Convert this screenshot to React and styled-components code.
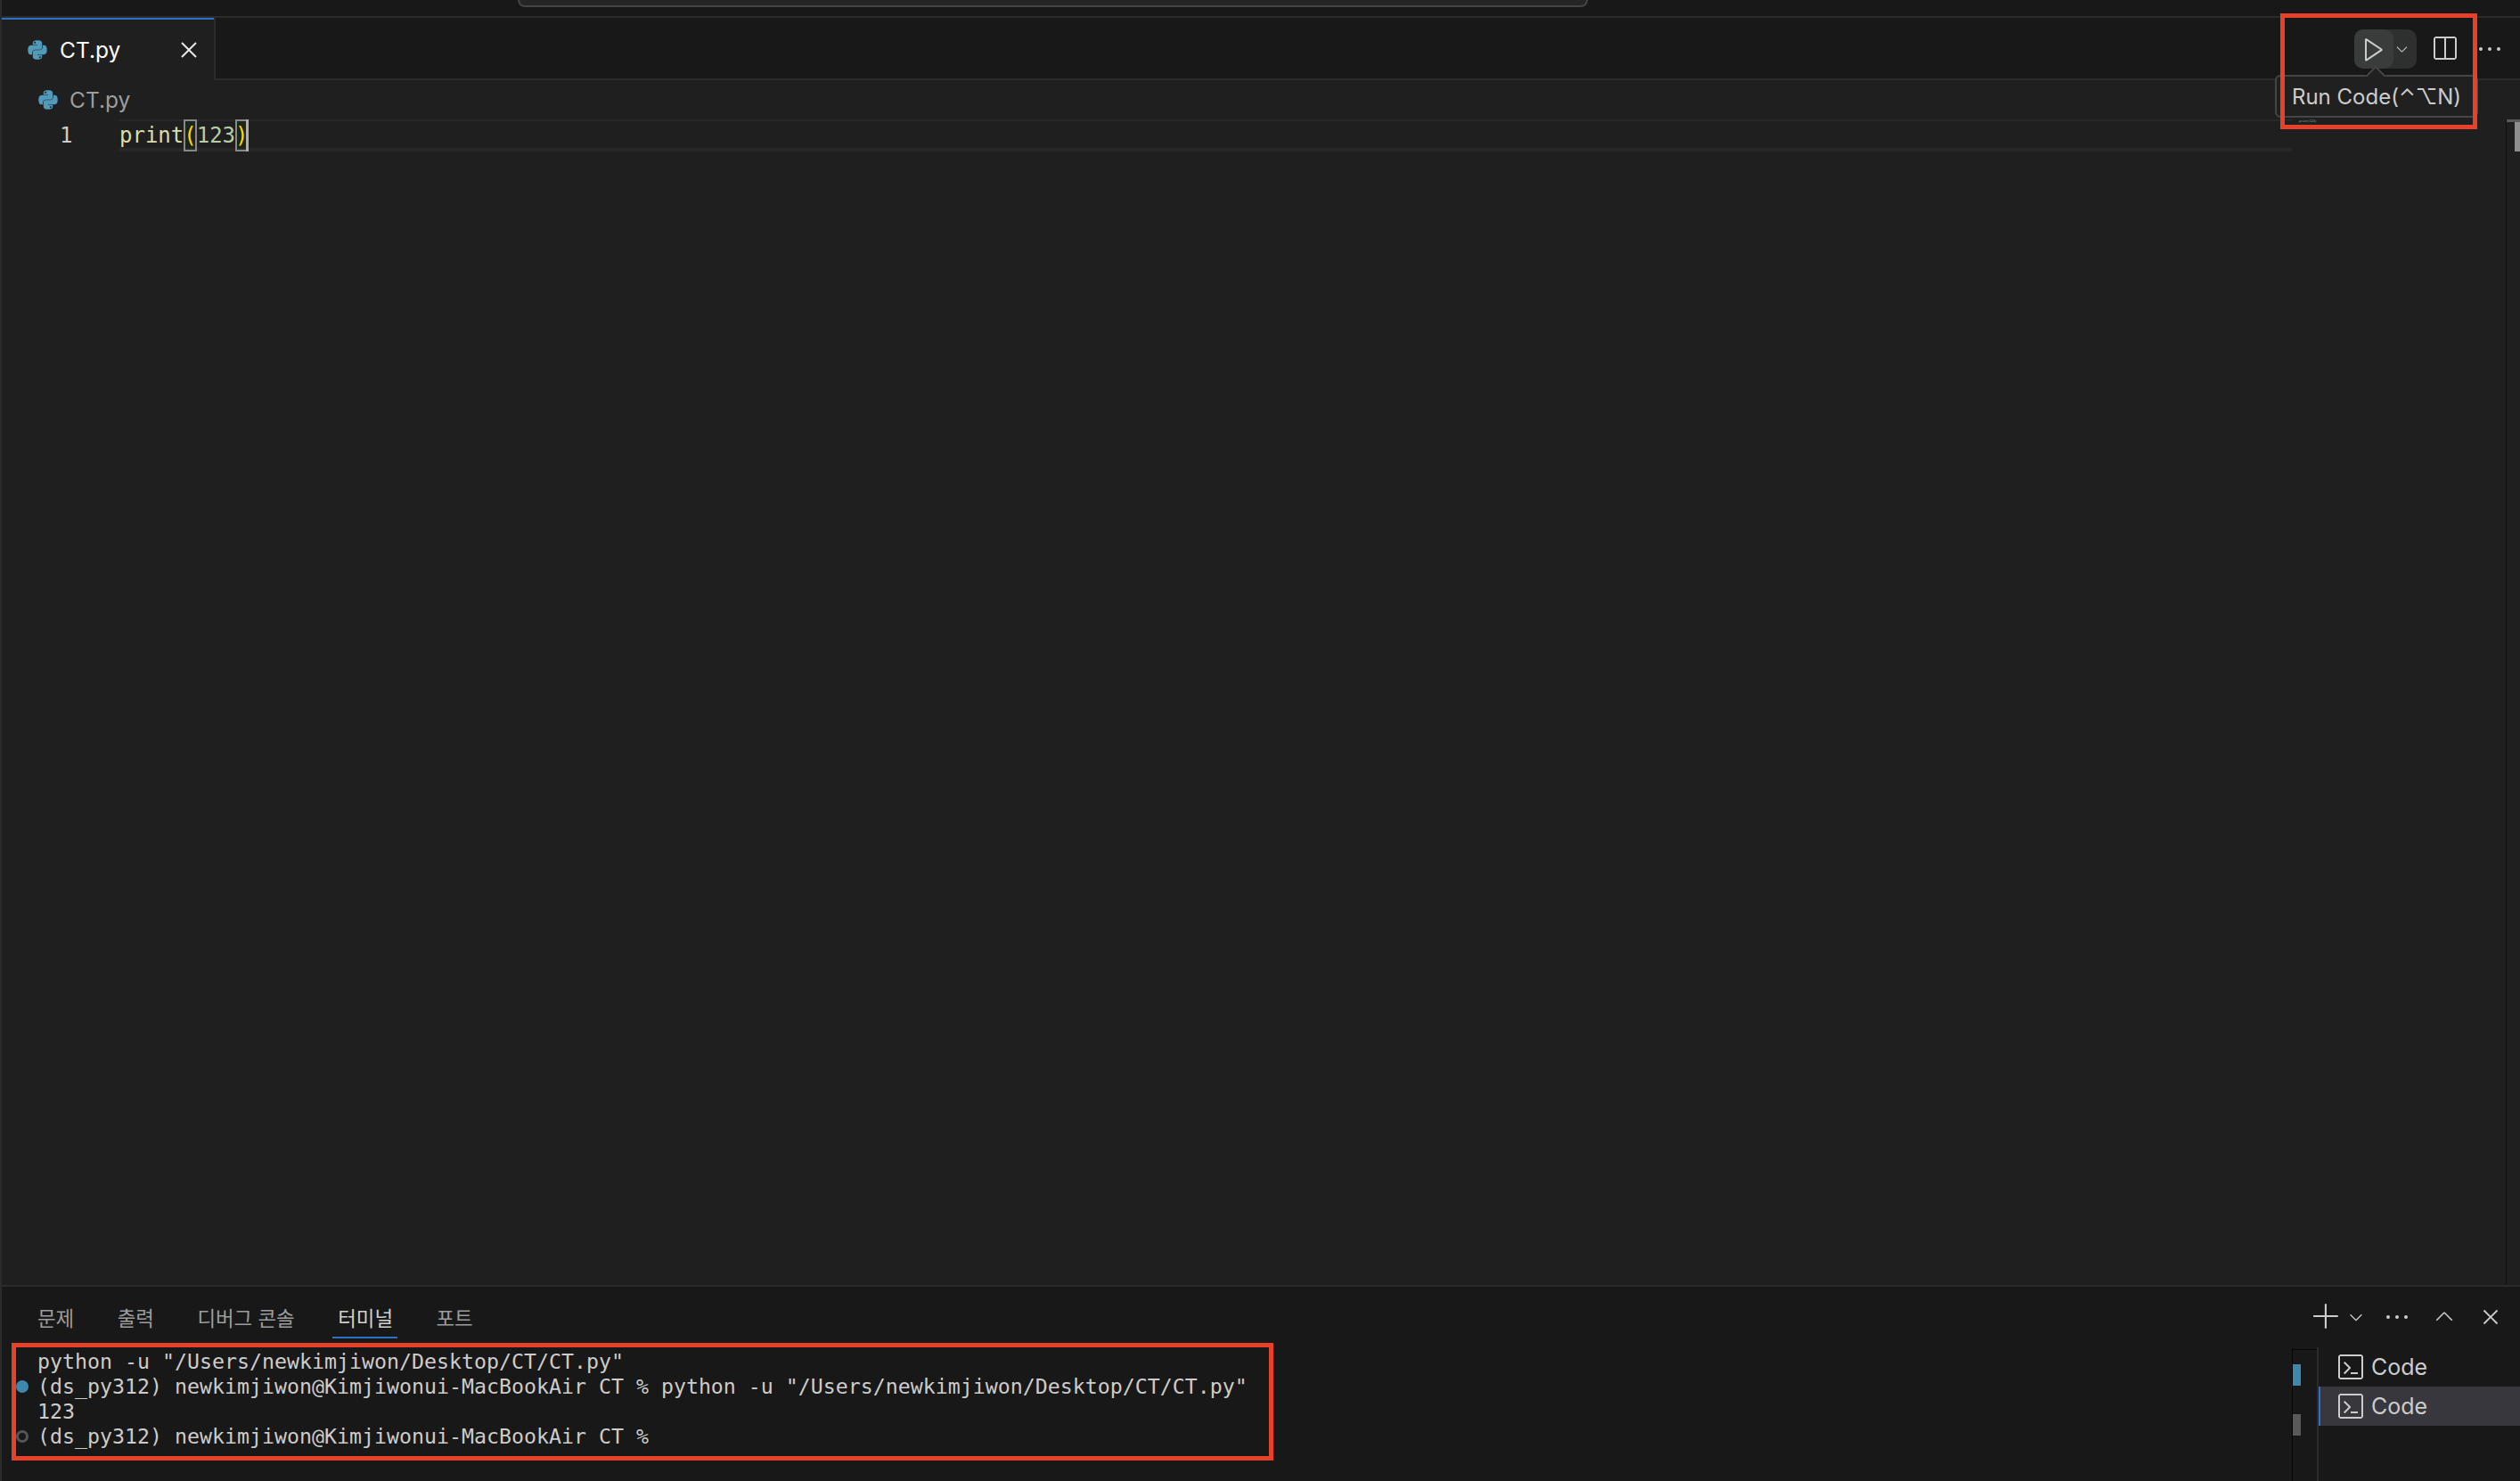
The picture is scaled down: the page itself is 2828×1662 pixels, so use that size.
import React from 'react';
import styled, { createGlobalStyle } from 'styled-components';
import {
  VscAdd,
  VscChevronDown,
  VscChevronUp,
  VscClose,
  VscEllipsis,
  VscPlay,
  VscSplitHorizontal,
  VscTerminal,
} from 'react-icons/vsc';

const GlobalStyle = createGlobalStyle`
  html, body {
    margin: 0;
    padding: 0;
    background: #1f1f1f;
  }
  * {
    box-sizing: border-box;
  }
`;

const uiFont = `Inter, "Noto Sans CJK KR", sans-serif`;
const monoFont = `"DejaVu Sans Mono", "Noto Sans CJK KR", monospace`;

const Window = styled.div`
  position: relative;
  width: 2828px;
  height: 1662px;
  overflow: hidden;
  display: flex;
  flex-direction: column;
  background: #1f1f1f;
  border-left: 2px solid #2b2b2b;
  font-family: ${uiFont};
`;

const TitleBar = styled.div`
  flex: none;
  height: 20px;
  margin-left: -2px;
  padding-left: 581px;
  background: #181818;
  border-bottom: 2px solid #2b2b2b;
`;

const SearchBox = styled.div`
  width: 1201px;
  height: 8px;
  background: #252526;
  border: 2px solid #454545;
  border-top: none;
  border-radius: 0 0 10px 10px;
`;

const TabBar = styled.div`
  flex: none;
  height: 70px;
  display: flex;
  background: #181818;
`;

const Tab = styled.div`
  width: 238px;
  height: 70px;
  display: flex;
  align-items: center;
  padding-left: 29px;
  background: #1f1f1f;
  border-top: 2px solid #2f6fc4;
  color: #ffffff;
  font-size: 24.5px;
`;

const TabName = styled.span`
  margin-left: 14px;
  flex: 1;
`;

const TabClose = styled.span`
  display: flex;
  margin-right: 12px;
  color: #e8e8e8;
`;

const TabRest = styled.div`
  flex: 1;
  display: flex;
  justify-content: flex-end;
  align-items: center;
  padding-top: 2px;
  border-left: 2px solid #2b2b2b;
  border-bottom: 2px solid #2b2b2b;
`;

const RunGroup = styled.div`
  display: flex;
  height: 44px;
  margin-right: 15px;
  border-radius: 10px;
  background: #2e2f2f;
  color: #cccccc;
`;

const RunButton = styled.span`
  width: 44px;
  display: flex;
  align-items: center;
  justify-content: center;
  background: #3a3b3b;
  border-radius: 10px;
`;

const RunCaret = styled.span`
  width: 26px;
  padding-right: 7px;
  display: flex;
  align-items: center;
  justify-content: center;
`;

const ActionIcon = styled.span`
  display: flex;
  margin-right: ${(p) => p.$gap}px;
  color: #cccccc;
`;

const Breadcrumb = styled.div`
  flex: none;
  height: 44px;
  display: flex;
  align-items: center;
  padding-left: 41px;
  color: #9d9d9d;
  font-size: 24.5px;
`;

const CrumbName = styled.span`
  margin-left: 13px;
`;

const EditorBody = styled.div`
  flex: 1;
  min-height: 0;
  display: flex;
`;

const EditorMain = styled.div`
  flex: 1;
  min-width: 0;
`;

const CodeLine = styled.div`
  display: flex;
  height: 36px;
  font-family: ${monoFont};
  font-size: 24px;
  line-height: 36px;
`;

const LineNumber = styled.div`
  width: 132px;
  padding-left: 65px;
  color: #cccccc;
`;

const LineContent = styled.div`
  flex: 1;
  display: flex;
  border-top: 2px solid #282828;
  border-bottom: 4px solid #282828;
  line-height: 32px;
`;

const Token = styled.span`
  color: ${(p) => p.$color};
`;

const Bracket = styled.span`
  display: inline-block;
  height: 36px;
  margin-top: -2px;
  line-height: 36px;
  color: #ffd700;
  background: rgba(0, 100, 0, 0.1);
  box-shadow: inset 0 0 0 2px #888888;
`;

const Cursor = styled.span`
  width: 3px;
  height: 36px;
  margin: -2px 0 0 -3px;
  background: #aeafad;
`;

const Minimap = styled.div`
  flex: none;
  width: 240px;
  padding-left: 8px;
  font-family: ${monoFont};
  font-size: 3.3px;
  line-height: 4px;
  color: #b8b88e;
`;

const ScrollTrack = styled.div`
  flex: none;
  width: 16px;
  background: #1f1f1f;
  border-left: 1px solid #0e0e0e;
`;

const OverviewCap = styled.div`
  height: 36px;
  border-top: 3px solid #5a5a5a;
  display: flex;
  justify-content: flex-end;
`;

const OverviewMark = styled.div`
  width: 6px;
  background: #8e8e8e;
`;

const Panel = styled.div`
  flex: none;
  height: 220px;
  display: flex;
  flex-direction: column;
  background: #181818;
  border-top: 2px solid #2b2b2b;
`;

const PanelHead = styled.div`
  flex: none;
  height: 68px;
  display: flex;
  justify-content: space-between;
  padding-left: 40px;
`;

const PanelTabs = styled.div`
  display: flex;
  gap: 48.5px;
`;

const PanelTab = styled.div`
  position: relative;
  height: 68px;
  padding-top: 20px;
  font-size: 22.4px;
  line-height: 32px;
  color: ${(p) => (p.$active ? '#d0d0d0' : '#9d9d9d')};
  &::after {
    content: '';
    display: ${(p) => (p.$active ? 'block' : 'none')};
    position: absolute;
    left: -6px;
    right: -5px;
    top: 56px;
    height: 2px;
    background: #2f6fc4;
  }
`;

const PanelActions = styled.div`
  display: flex;
  align-items: center;
  color: #cccccc;
`;

const PanelIcon = styled.span`
  display: flex;
  margin-right: ${(p) => p.$gap}px;
`;

const PanelBody = styled.div`
  flex: 1;
  min-height: 0;
  display: flex;
`;

const TerminalOutput = styled.div`
  flex: 1;
  padding-top: 2px;
  font-family: ${monoFont};
  font-size: 23.25px;
  line-height: 28px;
  color: #cccccc;
`;

const TerminalRow = styled.div`
  display: flex;
  height: 28px;
  white-space: pre;
`;

const RowGutter = styled.div`
  width: 40px;
  display: flex;
  align-items: center;
  padding-left: 16px;
`;

const StatusDot = styled.span`
  width: 14px;
  height: 14px;
  border-radius: 50%;
  background: ${(p) => (p.$filled ? '#3f87ad' : 'transparent')};
  border: ${(p) => (p.$filled ? 'none' : '3px solid #555555')};
`;

const TermScroll = styled.div`
  flex: none;
  width: 28px;
  margin-top: 2px;
  padding-top: 16px;
  border-left: 1px solid #050505;
  border-top: 1px solid #050505;
`;

const ScrollMark = styled.div`
  width: 9px;
  height: 24px;
  margin-bottom: ${(p) => p.$gap}px;
  background: ${(p) => p.$color};
`;

const TerminalList = styled.div`
  flex: none;
  width: 228px;
  border-left: 2px solid #2b2b2b;
`;

const TerminalItem = styled.div`
  height: 44px;
  display: flex;
  align-items: center;
  gap: 7px;
  padding-left: 18px;
  font-size: 25px;
  color: #cccccc;
  background: ${(p) => (p.$selected ? '#37373d' : 'transparent')};
  border-left: 2px solid ${(p) => (p.$selected ? '#2f6fc4' : 'transparent')};
`;

const Tooltip = styled.div`
  position: absolute;
  left: 2551px;
  top: 84px;
  width: 228px;
  height: 48px;
  display: flex;
  align-items: center;
  justify-content: center;
  background: #202020;
  border: 2px solid #454545;
  border-radius: 6px;
  color: #cccccc;
  font-size: 24px;
  white-space: nowrap;
  &::before {
    content: '';
    position: absolute;
    left: 103px;
    top: -9px;
    width: 14px;
    height: 14px;
    transform: rotate(45deg);
    background: #202020;
    border-left: 2px solid #454545;
    border-top: 2px solid #454545;
  }
`;

const Annotation = styled.div`
  position: absolute;
  left: ${(p) => p.$left}px;
  top: ${(p) => p.$top}px;
  width: ${(p) => p.$width}px;
  height: ${(p) => p.$height}px;
  border: 5px solid #e8412a;
  pointer-events: none;
`;

const snake =
  'M54.9.9c-4.6 0-8.9.4-12.7 1.1C31 4 29 8.1 29 15.7v10h26v3.3H19.3c-7.6 0-14.2 4.6-16.2 13.2-2.4 9.9-2.5 16.1 0 26.4 1.8 7.7 6.2 13.2 13.8 13.2h9V70.1c0-8.6 7.4-16.2 16.2-16.2h26c7.2 0 13-6 13-13.2V15.7c0-7.1-6-12.4-13-13.5C63.5 1.2 59.2.9 54.9.9zM40.8 8.9a4.9 4.9 0 1 1 0 9.9 4.9 4.9 0 0 1 0-9.9z';

function PythonIcon() {
  return (
    <svg width="22" height="22" viewBox="0 0 110 110" fill="#519aba" fillRule="evenodd">
      <path d={snake} />
      <path d={snake} transform="rotate(180 55 55)" />
    </svg>
  );
}

function App() {
  return (
    <>
      <GlobalStyle />
      <Window>
        <TitleBar>
          <SearchBox />
        </TitleBar>
        <TabBar>
          <Tab>
            <PythonIcon />
            <TabName>CT.py</TabName>
            <TabClose>
              <VscClose size={32} />
            </TabClose>
          </Tab>
          <TabRest>
            <RunGroup>
              <RunButton>
                <VscPlay size={32} />
              </RunButton>
              <RunCaret>
                <VscChevronDown size={24} />
              </RunCaret>
            </RunGroup>
            <ActionIcon $gap={19}>
              <VscSplitHorizontal size={32} />
            </ActionIcon>
            <ActionIcon $gap={18}>
              <VscEllipsis size={32} />
            </ActionIcon>
          </TabRest>
        </TabBar>
        <Breadcrumb>
          <PythonIcon />
          <CrumbName>CT.py</CrumbName>
        </Breadcrumb>
        <EditorBody>
          <EditorMain>
            <CodeLine>
              <LineNumber>1</LineNumber>
              <LineContent>
                <Token $color="#dcdcaa">print</Token>
                <Bracket>(</Bracket>
                <Token $color="#b5cea8">123</Token>
                <Bracket>)</Bracket>
                <Cursor />
              </LineContent>
            </CodeLine>
          </EditorMain>
          <Minimap>print(123)</Minimap>
          <ScrollTrack>
            <OverviewCap>
              <OverviewMark />
            </OverviewCap>
          </ScrollTrack>
        </EditorBody>
        <Panel>
          <PanelHead>
            <PanelTabs>
              <PanelTab>문제</PanelTab>
              <PanelTab>출력</PanelTab>
              <PanelTab>디버그 콘솔</PanelTab>
              <PanelTab $active>터미널</PanelTab>
              <PanelTab>포트</PanelTab>
            </PanelTabs>
            <PanelActions>
              <PanelIcon $gap={5}>
                <VscAdd size={34} />
              </PanelIcon>
              <PanelIcon $gap={19}>
                <VscChevronDown size={22} />
              </PanelIcon>
              <PanelIcon $gap={22}>
                <VscEllipsis size={32} />
              </PanelIcon>
              <PanelIcon $gap={22}>
                <VscChevronUp size={30} />
              </PanelIcon>
              <PanelIcon $gap={18}>
                <VscClose size={30} />
              </PanelIcon>
            </PanelActions>
          </PanelHead>
          <PanelBody>
            <TerminalOutput>
              <TerminalRow>
                <RowGutter />
                python -u "/Users/newkimjiwon/Desktop/CT/CT.py"
              </TerminalRow>
              <TerminalRow>
                <RowGutter>
                  <StatusDot $filled />
                </RowGutter>
                (ds_py312) newkimjiwon@Kimjiwonui-MacBookAir CT % python -u "/Users/newkimjiwon/Desktop/CT/CT.py"
              </TerminalRow>
              <TerminalRow>
                <RowGutter />
                123
              </TerminalRow>
              <TerminalRow>
                <RowGutter>
                  <StatusDot />
                </RowGutter>
                (ds_py312) newkimjiwon@Kimjiwonui-MacBookAir CT %
              </TerminalRow>
            </TerminalOutput>
            <TermScroll>
              <ScrollMark $color="#3f87ad" $gap={32} />
              <ScrollMark $color="#5a5a5a" $gap={0} />
            </TermScroll>
            <TerminalList>
              <TerminalItem>
                <VscTerminal size={32} />
                Code
              </TerminalItem>
              <TerminalItem $selected>
                <VscTerminal size={32} />
                Code
              </TerminalItem>
            </TerminalList>
          </PanelBody>
        </Panel>
        <Tooltip>Run Code(⌃⌥N)</Tooltip>
        <Annotation $left={2557} $top={15} $width={221} $height={130} />
        <Annotation $left={11} $top={1507} $width={1416} $height={132} />
      </Window>
    </>
  );
}

export default App;
